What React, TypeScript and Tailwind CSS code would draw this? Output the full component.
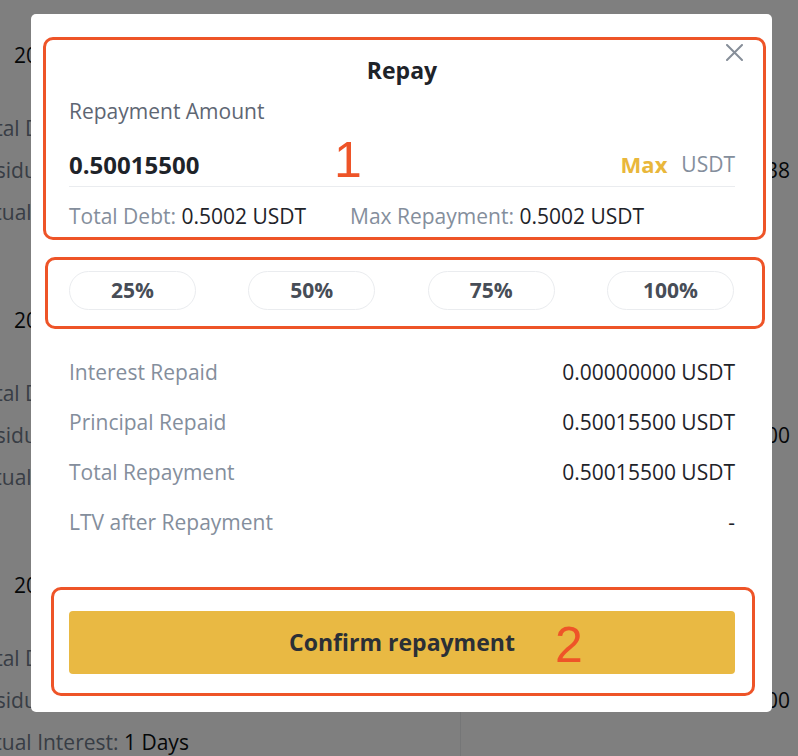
const CARDS = [
  { date: '2022-08-15 14:21', right: '0.00001238' },
  { date: '2022-08-14 09:02', right: '0.00000000' },
  { date: '2022-08-12 18:45', right: '0.00000000' },
];

const ROWS = [
  { label: 'Interest Repaid', value: '0.00000000 USDT' },
  { label: 'Principal Repaid', value: '0.50015500 USDT' },
  { label: 'Total Repayment', value: '0.50015500 USDT' },
  { label: 'LTV after Repayment', value: '-' },
];

function BackgroundPage() {
  return (
    <div className="-ml-[29px] w-[827px] bg-white">
      {CARDS.map((card, i) => (
        <div key={i} className="grid h-[265px] grid-cols-[489px_1fr] pt-[40px] text-[21px]">
          <div className="flex flex-col">
            <div className="ml-[43px] h-[30px] leading-[30px] text-[#0b0e11]">{card.date}</div>
            <div className="mt-[37px] h-[42px] leading-[42px]">
              <span className="text-[#707a8a]">Total Debt: </span>
              <span className="text-[#0b0e11]">0.5002 USDT</span>
            </div>
            <div className="h-[42px] leading-[42px]">
              <span className="text-[#707a8a]">Residual Interest: </span>
              <span className="text-[#0b0e11]">0.0001</span>
            </div>
            <div className="h-[42px] leading-[42px]">
              <span className="text-[#707a8a]">Actual Interest: </span>
              <span className="text-[#0b0e11]">1 Days</span>
            </div>
          </div>
          <div className="flex flex-col border-l border-[#eaecef] pr-[8px]">
            <div className="mt-[67px] h-[42px]" />
            <div className="h-[42px] text-right leading-[42px] text-[#0b0e11]">{card.right}</div>
          </div>
        </div>
      ))}
    </div>
  );
}

function Pill({ label }: { label: string }) {
  return (
    <div className="flex h-[39px] w-[127px] items-center justify-center rounded-full border border-[#eaecef] text-[21px] font-bold text-[#474d57]">
      {label}
    </div>
  );
}

export default function App() {
  return (
    <div className="relative h-[756px] w-[798px] overflow-hidden font-['Open_Sans',sans-serif]">
      <BackgroundPage />
      <div className="absolute inset-0 bg-black/50" />

      {/* modal */}
      <div className="absolute left-[31px] top-[14px] flex w-[741px] flex-col rounded-[5px] bg-white pb-[16px]">
        <div className="ml-[12px] mr-[6px] mt-[23px] flex h-[203px] flex-col rounded-[10px] border-[3px] border-[#ee5428] pl-[23px] pr-[28px]">
          <div className="mt-[15px] h-[30px] text-center text-[23px] font-bold leading-[30px] text-[#1e2329]">Repay</div>
          <div className="mt-[11px] h-[30px] text-[21px] leading-[30px] text-[#5e6673]">Repayment Amount</div>
          <div className="mt-[17px] flex h-[44px] items-center justify-between border-b border-[#eaecef]">
            <span className="text-[24px] font-bold text-[#1e2329]">0.50015500</span>
            <div className="flex items-center">
              <span className="text-[22px] font-bold text-[#e9b73b]">Max</span>
              <span className="ml-[14px] text-[21px] text-[#848e9c]">USDT</span>
            </div>
          </div>
          <div className="mt-[14px] grid h-[30px] grid-cols-[281px_1fr] items-center text-[21px]">
            <div>
              <span className="text-[#848e9c]">Total Debt: </span>
              <span className="text-[#1e2329]">0.5002 USDT</span>
            </div>
            <div>
              <span className="text-[#848e9c]">Max Repayment: </span>
              <span className="text-[#1e2329]">0.5002 USDT</span>
            </div>
          </div>
        </div>

        <div className="ml-[14px] mr-[7px] mt-[17px] flex h-[72px] items-start justify-between rounded-[10px] border-[3px] border-[#ee5428] pl-[21px] pr-[28px] pt-[11px]">
          <Pill label="25%" />
          <Pill label="50%" />
          <Pill label="75%" />
          <Pill label="100%" />
        </div>

        <div className="mt-[19px] flex flex-col pl-[38px] pr-[37px]">
          {ROWS.map((row) => (
            <div key={row.label} className="flex h-[50px] items-center justify-between text-[21px]">
              <span className="text-[#848e9c]">{row.label}</span>
              <span className="text-[#1e2329]">{row.value}</span>
            </div>
          ))}
        </div>

        <div className="ml-[20px] mr-[17px] mt-[39px] flex h-[109px] flex-col rounded-[10px] border-[3px] border-[#ee5428] pl-[15px] pr-[17px] pt-[21px]">
          <button className="flex h-[63px] w-full items-center justify-center rounded-[4px] bg-[#e9b943] text-[23px] font-bold text-[#2b2f36]">
            Confirm repayment
          </button>
        </div>

        {/* close */}
        <svg className="absolute left-[695px] top-[30px]" width="17" height="17" viewBox="0 0 17 17">
          <path d="M1 1L16 16M16 1L1 16" stroke="#868e99" strokeWidth="2" strokeLinecap="round" />
        </svg>

        {/* annotation numbers */}
        <span className="absolute left-[303px] top-[121px] text-[50px] leading-none text-[#ee5428] font-['Liberation_Sans',Arial,sans-serif]">1</span>
        <span className="absolute left-[524px] top-[606px] text-[50px] leading-none text-[#ee5428] font-['Liberation_Sans',Arial,sans-serif]">2</span>
      </div>
    </div>
  );
}
